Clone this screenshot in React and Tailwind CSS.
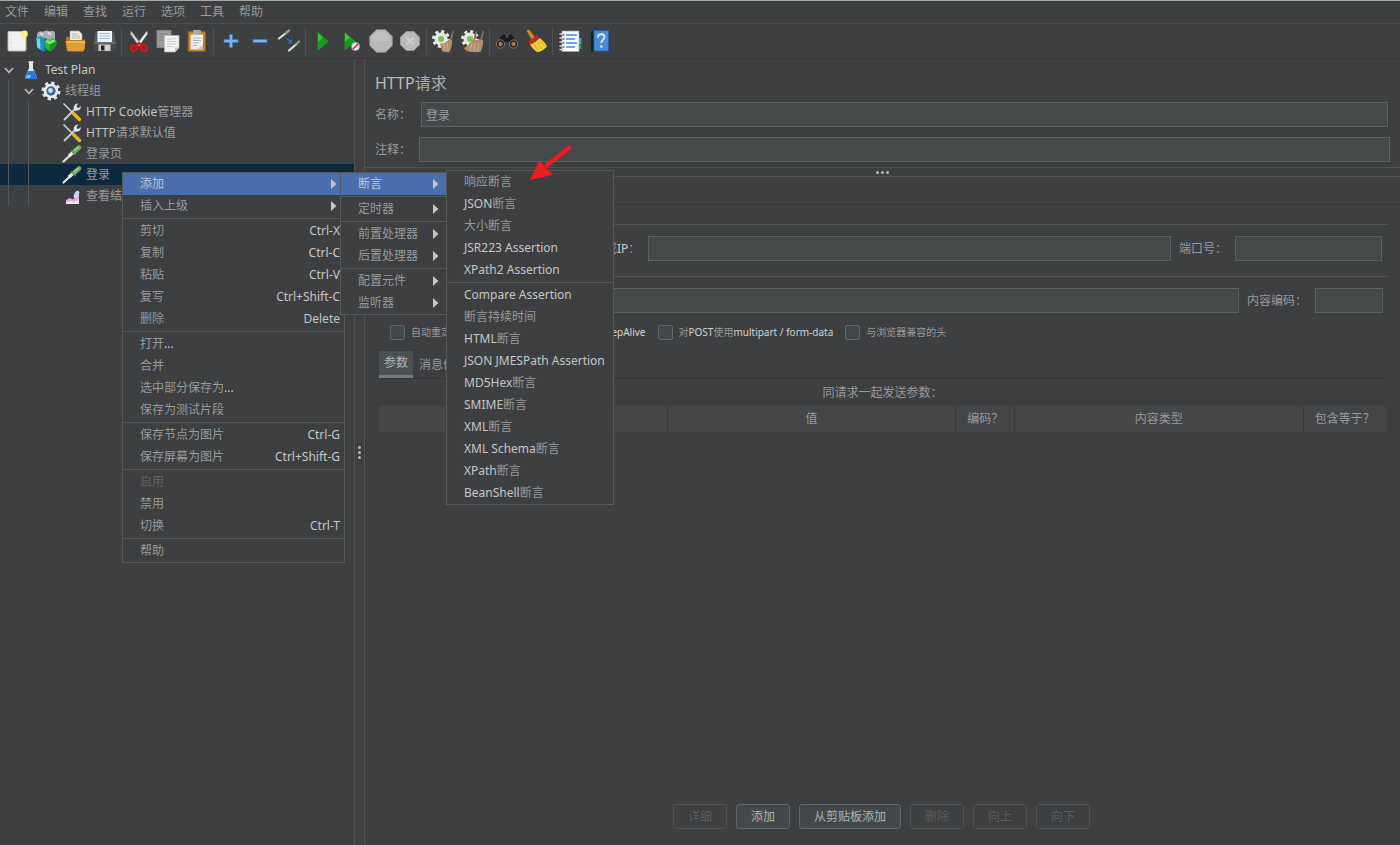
import React from "react";

/* ---------- text helper: Latin runs are drawn brighter than the Chinese ones ---------- */

function Mixed({ text, latin = "text-[#c6c8c9]" }) {
  const parts = text.split(/([\x21-\x7e][\x20-\x7e]*)/).filter(Boolean);
  return parts.map((part, i) =>
    /^[\x21-\x7e]/.test(part) ? (
      <span key={i} className={latin}>
        {part}
      </span>
    ) : (
      part
    )
  );
}

/* ---------- toolbar icons ---------- */

function Icon({ children }) {
  return (
    <svg viewBox="0 0 24 24" className="h-6 w-6" aria-hidden="true">
      {children}
    </svg>
  );
}

const NewIcon = () => (
  <Icon>
    <rect x="2" y="2.500" width="18" height="19.500" rx="1" fill="#f1f1ef" stroke="#b9bab8" />
    <path d="M5 5v15" stroke="#cfcfcf" strokeDasharray="1.500 2.500" />
    <circle cx="18.500" cy="5" r="3.400" fill="#f4ee74" />
    <circle cx="18.500" cy="5" r="1.500" fill="#fffbd0" />
  </Icon>
);

const TemplatesIcon = () => (
  <Icon>
    <path d="M2 5.500C2.500 2.500 6 1.500 8 3c2-2 5-2 6.500-.500C16 1 19.500 1.500 20 4v6l-9 3-9-4z" fill="#a9afb3" />
    <path d="M5 4l3 2M13 3.500l3 2" stroke="#e5e8ea" strokeWidth="1.600" />
    <path d="M1.500 8.500l5-1 5 3v10.500l-4 1.500-5.500-4z" fill="#1c93c2" />
    <path d="M1.500 8.500l3.500 1.500.5 10.500L2 18z" fill="#79d3e8" />
    <path d="M9.500 10l2-1v11l-2 2z" fill="#0a5f8a" />
    <path d="M9.500 13.500C10 10.500 13 9.500 15 11c1.500-2.500 6-1.500 6.500 1.500.5 4-2 7.500-6.500 9.500-3-.500-6-3.500-5.500-8.500z" fill="#29b52d" />
    <path d="M10.500 13c1-2 3-2.500 4.500-.800 1.500-2 4-2 5.500 0L15 15.500z" fill="#7ee765" />
    <path d="M15 15.500V22c4.500-2 7-5.500 6.500-9.500z" fill="#13961c" />
  </Icon>
);

const OpenIcon = () => (
  <Icon>
    <path d="M6 2h9l3 3v9H6z" fill="#f0f0ee" stroke="#a5a5a3" strokeWidth=".7" />
    <path d="M8 5h6M8 7h8M8 9h8" stroke="#a8a8a8" strokeWidth=".9" />
    <path d="M2 9.500c0-1 .5-1.500 1.500-1.500H6v3h13l2-1v10H3.500z" fill="#b77a1c" />
    <path d="M1.500 12h20l-1.500 9.500c-.2.700-.7 1-1.500 1h-14c-.8 0-1.300-.3-1.500-1z" fill="#dd9f35" />
    <path d="M2.500 13h18" stroke="#f7cf7c" />
  </Icon>
);

const SaveIcon = () => (
  <Icon>
    <path d="M2.500 2.500h18.500l1.500 11v8.500H1V13.500z" fill="#5a5e61" />
    <rect x="4.500" y="2" width="14.500" height="11" fill="#edf2f7" />
    <path d="M6.500 4.500h10.500M6.500 7h10.500M6.500 9.500h10.500" stroke="#a3bfdc" strokeWidth="1.100" />
    <path d="M1 14h21.500v8H1z" fill="#46494c" />
    <path d="M1 14h21.500" stroke="#85898c" />
    <rect x="5.500" y="15.500" width="12" height="6.500" fill="#cfd1d2" />
    <rect x="8" y="16.500" width="3.500" height="5" fill="#232527" />
  </Icon>
);

const CutIcon = () => (
  <Icon>
    <path d="M4 2l10 13-2 2L3.500 5z" fill="#d9dcdd" stroke="#8c8f90" strokeWidth=".6" />
    <path d="M20 2L10 15l2 2 8.500-12z" fill="#f2f3f3" stroke="#8c8f90" strokeWidth=".6" />
    <ellipse cx="7" cy="19" rx="3.200" ry="2.800" transform="rotate(-35 7 19)" fill="none" stroke="#d11717" strokeWidth="2.600" />
    <ellipse cx="17" cy="19" rx="3.200" ry="2.800" transform="rotate(35 17 19)" fill="none" stroke="#d11717" strokeWidth="2.600" />
    <path d="M9 17l3-3 3 3" fill="none" stroke="#d11717" strokeWidth="2.200" />
  </Icon>
);

const CopyIcon = () => (
  <Icon>
    <rect x="1" y="1.500" width="14" height="17" fill="#9b9d9d" stroke="#858787" />
    <path d="M3 5h9M3 8h9M3 11h5" stroke="#7f8181" />
    <path d="M8.500 6.500H23v12l-4 4.500H8.500z" fill="#f3f3f1" stroke="#b3b4b3" strokeWidth=".7" />
    <path d="M11 10h9M11 12.500h9M11 15h9M11 17.500h6" stroke="#c3c4c4" strokeWidth=".9" />
    <path d="M23 18.500h-4V23z" fill="#c4c5c5" />
  </Icon>
);

const PasteIcon = () => (
  <Icon>
    <rect x="3" y="2.500" width="17.500" height="20" rx="1" fill="#c08322" stroke="#8c5b12" strokeWidth=".8" />
    <path d="M5.500 5.500h12.500V20.500H5.500z" fill="#efefed" />
    <rect x="8" y="1" width="8" height="4.500" rx="1" fill="#a8aaab" />
    <path d="M8 9h8M8 11.500h8M8 14h6M8 16.500h4" stroke="#b0b0b0" />
    <path d="M18 15.500L12.500 20.500H18z" fill="#c3c3c2" />
  </Icon>
);

const PlusIcon = () => (
  <Icon>
    <path d="M10.500 5.500h3v5h5.500v3h-5.500v5h-3v-5H5v-3h5.500z" fill="#7db2ee" stroke="#3d78c0" strokeWidth=".7" />
  </Icon>
);

const MinusIcon = () => (
  <Icon>
    <rect x="5" y="10.500" width="14" height="3" fill="#7db2ee" stroke="#3d78c0" strokeWidth=".7" />
  </Icon>
);

const ToggleIcon = () => (
  <Icon>
    <path d="M2 9.500l7-5.500" stroke="#dfe4dc" strokeWidth="2.200" strokeLinecap="round" />
    <path d="M9 4l3-2.500" stroke="#83b364" strokeWidth="2.400" strokeLinecap="round" />
    <path d="M12 21.500l7-6" stroke="#dfe4dc" strokeWidth="2.200" strokeLinecap="round" />
    <path d="M19 15.500l3-3" stroke="#83b364" strokeWidth="2.400" strokeLinecap="round" />
    <path d="M9.500 9l4 4" stroke="#2f6fc4" strokeWidth="1.500" />
    <path d="M15 14.500v-4.500l-4.500 4.500z" fill="#2f6fc4" />
  </Icon>
);

const StartIcon = () => (
  <Icon>
    <path d="M6.500 3L18 12.500 6.500 22z" fill="#1b9a1d" />
    <path d="M7 4l5 4.500L7 13z" fill="#3cc63c" />
  </Icon>
);

const StartNoPauseIcon = () => (
  <Icon>
    <path d="M4.500 3L16 12.500 4.500 21.500z" fill="#1b9a1d" />
    <path d="M5 4l5 4.500L5 13z" fill="#3cc63c" />
    <circle cx="15.500" cy="17.500" r="4" fill="#e9f0fa" stroke="#7fa3d4" strokeWidth="1" />
    <path d="M13 20l5-5" stroke="#d92c2c" strokeWidth="1.700" />
  </Icon>
);

const StopIcon = () => (
  <Icon>
    <path d="M7.500.8h9L23.200 7.500v9l-6.700 6.700h-9L.8 16.500v-9z" fill="#b7b9b8" stroke="#989a9a" strokeWidth=".9" />
    <path d="M8 2.500h8l5.500 5.500v4h-19V8z" fill="#bfc1c0" />
  </Icon>
);

const ShutdownIcon = () => (
  <Icon>
    <path d="M8.200 2.500h7.600l5.700 5.700v7.600l-5.700 5.700H8.200l-5.700-5.700V8.200z" fill="#b9bbba" stroke="#989a9a" strokeWidth=".9" />
    <path d="M8.500 8.500l7 7M15.500 8.500l-7 7" stroke="#cccecd" strokeWidth="2" />
  </Icon>
);

const Gear = () => (
  <g>
    <circle cx="9" cy="10" r="7.500" fill="none" stroke="#e9ebe9" strokeWidth="3" strokeDasharray="3 2.890" />
    <circle cx="9" cy="10" r="6.600" fill="#e4e7e4" />
    <circle cx="9" cy="10" r="3" fill="#7cc44c" />
  </g>
);

const ClearIcon = () => (
  <Icon>
    <Gear />
    <path d="M20.500 1.500l1.500.5-2.500 10-2-.5z" fill="#86705a" />
    <path d="M8 14.500c3.500.5 7-1.500 9-4l3 .5c.5 4-.5 8-2.500 12-3 .5-6 0-7.500-1z" fill="#b18f68" />
    <path d="M12 15.500l1 6M15.500 14l.5 8" stroke="#d2b48d" strokeWidth=".9" />
  </Icon>
);

const ClearAllIcon = () => (
  <Icon>
    <Gear />
    <path d="M14.500 2l1.500.5-1.500 8h-2zM21.500 1.500l1.500.5-2 10h-2z" fill="#86705a" />
    <path d="M3 19c3-1 6-5 9-8.500l3 .5 4-.5 3 .5c.5 4-.5 8-2.500 12-5 .3-9 .2-12-.500-2-.5-3.500-1.500-4.500-3.500z" fill="#b18f68" />
    <path d="M11 14.500l-2 7M14 14l-1 8M17.500 14l-.5 8" stroke="#d2b48d" strokeWidth=".9" />
  </Icon>
);

const SearchIcon = () => (
  <Icon>
    <path d="M6.500 5.500l3.500-1 1.500 4h1l1.500-4 3.500 1 5.500 9-3 5-6-2-1-4h-2l-1 4-6 2-3-5z" fill="#17191b" stroke="#595b5d" strokeWidth=".7" />
    <circle cx="5.500" cy="15" r="4.200" fill="#24272a" stroke="#77797b" strokeWidth="1" />
    <circle cx="18.500" cy="15" r="4.200" fill="#24272a" stroke="#77797b" strokeWidth="1" />
    <circle cx="5.500" cy="15" r="2.200" fill="#b8713f" />
    <circle cx="18.500" cy="15" r="2.200" fill="#b8713f" />
  </Icon>
);

const BroomIcon = () => (
  <Icon>
    <path d="M2.500 1.500c1.500-1.200 3-.8 4 .7L11 8.500 7.500 10.500z" fill="#d18a2a" />
    <path d="M4 12.500c3-1.500 6-4 8.500-7L15.500 9c-2.500 3-6 5.500-9.500 6.500z" fill="#c02a1a" />
    <path d="M6 15.500c3.500-1 7-3.500 9.500-6.500 3 2 5.500 4.500 7.500 8.500-2.500 3-6 5-9.500 5.700-3-1.700-5.500-4.200-7.500-7.700z" fill="#f3cf3c" />
    <path d="M10 15.500l4.500 6M13 13l5 7M15.500 11.500l5.500 6" stroke="#c69a18" strokeWidth=".8" />
  </Icon>
);

const FunctionIcon = () => (
  <Icon>
    <path d="M19 9h4.500v6H19z" fill="#4b8fd8" />
    <path d="M19 15h4.500v5H19z" fill="#23a52b" />
    <rect x="4" y="2" width="17" height="20.500" fill="#fafafa" stroke="#9fa1a2" strokeWidth=".7" />
    <path d="M8 6h11M8 10h9M8 14h11M8 18h9" stroke="#4489d8" strokeWidth="1.600" />
    <path d="M1.500 5h5M1.500 9h5M1.500 13h5M1.500 17h5M1.500 20.500h5" stroke="#d6d7d8" strokeWidth="1.600" />
    <path d="M4.500 6h2M4.500 10h2M4.500 14h2M4.500 18h2" stroke="#222" />
  </Icon>
);

const HelpIcon = () => (
  <Icon>
    <path d="M4 2.500l4-1V22l-4 1z" fill="#15202f" />
    <rect x="7" y="1.500" width="14.500" height="20.500" fill="#4a8ad6" stroke="#2b62a8" strokeWidth=".8" />
    <path d="M11 8.500c0-4.500 6.500-4 6.500-.5 0 3-3.200 2.700-3.200 6" fill="none" stroke="#dceafa" strokeWidth="1.800" />
    <circle cx="14.300" cy="17.500" r="1.200" fill="#dceafa" />
  </Icon>
);

const TOOLBAR = [
  [["新建", NewIcon], ["模板", TemplatesIcon], ["打开", OpenIcon], ["保存", SaveIcon]],
  [["剪切", CutIcon], ["复制", CopyIcon], ["粘贴", PasteIcon]],
  [["展开", PlusIcon], ["收起", MinusIcon], ["切换", ToggleIcon]],
  [["启动", StartIcon], ["不停顿启动", StartNoPauseIcon], ["停止", StopIcon], ["关闭", ShutdownIcon]],
  [["清除", ClearIcon], ["清除全部", ClearAllIcon]],
  [["查找", SearchIcon], ["重置查找", BroomIcon]],
  [["函数助手", FunctionIcon], ["帮助", HelpIcon]],
];

/* ---------- tree icons ---------- */

function TreeSvg({ children }) {
  return (
    <svg viewBox="0 0 20 20" className="h-5 w-5" aria-hidden="true">
      {children}
    </svg>
  );
}

const FlaskIcon = () => (
  <TreeSvg>
    <path d="M8 2h4v6l4 9.500c.2.900-.3 1.500-1 1.500H5c-.7 0-1.200-.6-1-1.500L8 8z" fill="#dfe7ef" />
    <path d="M7 11h6l3 6.500c.2.900-.3 1.500-1 1.500H5c-.7 0-1.200-.6-1-1.500z" fill="#1f7be0" />
    <path d="M6 15h4l-1 3H5z" fill="#7db9f5" />
    <path d="M7.500 2h5" stroke="#f2f5f8" strokeWidth="1.500" />
  </TreeSvg>
);

const CogIcon = () => (
  <TreeSvg>
    <circle cx="10" cy="10" r="8" fill="none" stroke="#dfe3e7" strokeWidth="3" strokeDasharray="3.280 3" />
    <circle cx="10" cy="10" r="6" fill="#3f679d" stroke="#e8ebee" strokeWidth="2.600" />
    <circle cx="9.500" cy="9.500" r="2.400" fill="#cfe0f4" />
  </TreeSvg>
);

const ToolsIcon = () => (
  <TreeSvg>
    <path d="M1.500 1.500l8 8" stroke="#d5d8da" strokeWidth="1.600" />
    <path d="M11.500 11.500l6 6" stroke="#eab620" strokeWidth="3.400" strokeLinecap="round" />
    <path d="M2.500 17.500l11-11" stroke="#c9cccd" strokeWidth="2" strokeLinecap="round" />
    <path d="M12 7.500c-1-3 1-6.500 4.500-6l-2 2.500.5 1.500 1.500.5 2.300-2C19.500 7 16 9.500 13 8.500z" fill="#e2e4e5" />
  </TreeSvg>
);

const PipetteIcon = () => (
  <TreeSvg>
    <path d="M1.500 17.500l9-8.500" stroke="#dfe3e0" strokeWidth="2.200" strokeLinecap="round" />
    <path d="M7 12l4-3.700" stroke="#eceeed" strokeWidth="3.200" />
    <path d="M9 6.500l4.500 4.500" stroke="#6d8a63" strokeWidth="1.400" />
    <path d="M12.500 7.500L17 3.500" stroke="#69ad59" strokeWidth="4.600" strokeLinecap="round" />
    <path d="M12.500 6.500L16 3.500" stroke="#a6d896" strokeWidth="1.300" strokeLinecap="round" />
  </TreeSvg>
);

const ResultsIcon = () => (
  <TreeSvg>
    <path d="M4 18v-4l4-2 3 1.500 6-6.500v11z" fill="#e6a5dc" />
    <path d="M4 18v-2l5-1 3 1 5-3v5z" fill="#f6e3f3" />
    <ellipse cx="14.500" cy="8.500" rx="2.300" ry="4" transform="rotate(25 14.500 8.500)" fill="#c4daf3" />
  </TreeSvg>
);

const Chevron = () => (
  <svg viewBox="0 0 10 10" className="h-[10px] w-[10px]" aria-hidden="true">
    <path d="M1 3l4 4.500L9 3" fill="none" stroke="#b4b6b8" strokeWidth="1.800" />
  </svg>
);

const TREE = [
  { label: "Test Plan", depth: 0, icon: FlaskIcon },
  { label: "线程组", depth: 1, icon: CogIcon },
  { label: "HTTP Cookie管理器", depth: 2, icon: ToolsIcon },
  { label: "HTTP请求默认值", depth: 2, icon: ToolsIcon },
  { label: "登录页", depth: 2, icon: PipetteIcon },
  { label: "登录", depth: 2, icon: PipetteIcon, selected: true },
  { label: "查看结果树", depth: 2, icon: ResultsIcon },
];

function Guide() {
  return <span className="h-full w-px bg-[#55585a]" />;
}

function TreeRow({ item }) {
  const { label, depth, icon: NodeIcon, selected } = item;
  return (
    <li
      role="treeitem"
      aria-selected={!!selected}
      className={`relative flex h-[21px] items-center whitespace-nowrap ${selected ? "bg-[#0d293e]" : ""}`}
    >
      {depth >= 1 && (
        <span className="flex h-full w-5 shrink-0 pl-2">
          <Guide />
        </span>
      )}
      {depth === 2 && (
        <span className="flex h-full w-[38px] shrink-0 pl-2">
          <Guide />
        </span>
      )}
      {depth < 2 && (
        <span className="flex w-[17px] shrink-0 items-center justify-center">
          <Chevron />
        </span>
      )}
      <span className="flex w-7 shrink-0 items-center justify-center">
        <NodeIcon />
      </span>
      <span>
        <Mixed text={label} />
      </span>
      {selected && <ContextMenu />}
    </li>
  );
}

/* ---------- menus ---------- */

const Arrow = () => (
  <svg viewBox="0 0 7 10" className="h-[10px] w-[7px]" aria-hidden="true">
    <path d="M1 0l5.500 5L1 10z" fill="#c3c5c6" />
  </svg>
);

function MenuItem({ label, keys, sub, active, disabled }) {
  return (
    <button
      type="button"
      role="menuitem"
      disabled={disabled}
      className={`flex h-[22px] w-full items-center justify-between whitespace-nowrap pl-[17px] ${
        sub ? "pr-[7px]" : "pr-1"
      } ${active ? "bg-[#4b6eaf] text-[#bcc5d4]" : ""} ${disabled ? "text-[#606264]" : ""}`}
    >
      <span>
        <Mixed text={label} />
      </span>
      {keys && <span className="text-[#c6c8c9]">{keys}</span>}
      {sub && <Arrow />}
    </button>
  );
}

function Menu({ groups, className, label, children }) {
  return (
    <div
      role="menu"
      aria-label={label}
      className={`absolute border border-[#56585a] bg-[#3d3f41] text-[#999b9d] ${className}`}
    >
      {groups.map((group, i) => (
        <div key={i} className={i > 0 ? "mt-px border-t border-[#56585a] pt-px" : ""}>
          {group.map((item) => (
            <MenuItem key={item.label} {...item} />
          ))}
        </div>
      ))}
      {children}
    </div>
  );
}

const CONTEXT_GROUPS = [
  [
    { label: "添加", sub: true, active: true },
    { label: "插入上级", sub: true },
  ],
  [
    { label: "剪切", keys: "Ctrl-X" },
    { label: "复制", keys: "Ctrl-C" },
    { label: "粘贴", keys: "Ctrl-V" },
    { label: "复写", keys: "Ctrl+Shift-C" },
    { label: "删除", keys: "Delete" },
  ],
  [{ label: "打开..." }, { label: "合并" }, { label: "选中部分保存为..." }, { label: "保存为测试片段" }],
  [
    { label: "保存节点为图片", keys: "Ctrl-G" },
    { label: "保存屏幕为图片", keys: "Ctrl+Shift-G" },
  ],
  [{ label: "启用", disabled: true }, { label: "禁用" }, { label: "切换", keys: "Ctrl-T" }],
  [{ label: "帮助" }],
];

const ADD_GROUPS = [
  [{ label: "断言", sub: true, active: true }],
  [{ label: "定时器", sub: true }],
  [
    { label: "前置处理器", sub: true },
    { label: "后置处理器", sub: true },
  ],
  [
    { label: "配置元件", sub: true },
    { label: "监听器", sub: true },
  ],
];

const ASSERTION_GROUPS = [
  [
    { label: "响应断言" },
    { label: "JSON断言" },
    { label: "大小断言" },
    { label: "JSR223 Assertion" },
    { label: "XPath2 Assertion" },
  ],
  [
    { label: "Compare Assertion" },
    { label: "断言持续时间" },
    { label: "HTML断言" },
    { label: "JSON JMESPath Assertion" },
    { label: "MD5Hex断言" },
    { label: "SMIME断言" },
    { label: "XML断言" },
    { label: "XML Schema断言" },
    { label: "XPath断言" },
    { label: "BeanShell断言" },
  ],
];

function ContextMenu() {
  return (
    <Menu label="节点菜单" groups={CONTEXT_GROUPS} className="left-[122px] top-2 z-20 w-[223px]">
      <Menu label="添加" groups={ADD_GROUPS} className="left-[217px] -top-px w-[107px]">
        <Menu label="断言" groups={ASSERTION_GROUPS} className="left-[105px] -top-[3px] w-[168px]">
          <svg viewBox="0 0 44 38" className="absolute left-[82px] -top-[27px] h-[38px] w-[44px]" aria-hidden="true">
            <path d="M40 4L18 21" stroke="#ee1c24" strokeWidth="4.500" strokeLinecap="round" />
            <path d="M1 36L10.500 16.500l4 4.500 9.500 9.500z" fill="#ee1c24" />
            <path d="M1 36L11 18l11 13z" fill="#ee1c24" />
          </svg>
        </Menu>
      </Menu>
    </Menu>
  );
}

/* ---------- request editor ---------- */

const FIELD = "h-[25px] min-w-0 border border-[#5e6162] bg-[#45494a] px-1 text-[#999b9d] outline-none";

const CHECKS = ["自动重定向", "跟随重定向", "使用 KeepAlive", "对POST使用multipart / form-data", "与浏览器兼容的头"];

function RequestPanel() {
  return (
    <main className="flex min-w-0 flex-1 flex-col">
      <header className="px-[10px] pb-[5px] pt-3">
        <h1 className="h-6 text-[16px] leading-6 text-[#a9abac]">
          <Mixed text="HTTP请求" latin="text-[#b9bbbc]" />
        </h1>
        <div className="mt-[7px] flex items-center pr-[2px]">
          <label htmlFor="name" className="w-[46px]">
            名称：
          </label>
          <input id="name" defaultValue="登录" className={`${FIELD} flex-1`} />
        </div>
        <div className="mt-[10px] flex items-center">
          <label htmlFor="comment" className="w-[44px]">
            注释：
          </label>
          <input id="comment" className={`${FIELD} flex-1`} />
        </div>
      </header>

      <div className="flex h-[10px] items-center justify-center gap-[2px] border-y border-[#505254]">
        <i className="h-[3px] w-[3px] rounded-full bg-[#b8babb]" />
        <i className="h-[3px] w-[3px] rounded-full bg-[#b8babb]" />
        <i className="h-[3px] w-[3px] rounded-full bg-[#b8babb]" />
      </div>

      <div className="h-7 border-b border-[#343638]" />

      <section className="flex flex-1 flex-col pl-[14px] pr-3 pt-[19px]">
        <div className="flex items-center gap-2 border-t border-[#505254] pl-[49px] pr-[6px] pt-[11px]">
          <input id="protocol" aria-label="协议" className={`${FIELD} w-[109px]`} />
          <label htmlFor="server">
            <Mixed text="服务器名称或IP：" />
          </label>
          <input id="server" className={`${FIELD} flex-1`} />
          <label htmlFor="port">端口号：</label>
          <input id="port" className={`${FIELD} w-[147px]`} />
        </div>

        <div className="mt-[15px] flex items-center gap-2 border-t border-[#505254] pr-[5px] pt-[11px]">
          <select
            aria-label="请求方法"
            className="h-[25px] w-16 border border-[#5e6162] bg-[#45494a] text-[#bfc1c2]"
          />
          <input id="path" aria-label="路径" className={`${FIELD} flex-1`} />
          <label htmlFor="encoding">内容编码：</label>
          <input id="encoding" className={`${FIELD} w-[68px]`} />
        </div>

        <div className="mt-[10px] flex h-[18px] items-center gap-3 whitespace-nowrap pl-[11px] text-[10px]">
          {CHECKS.map((text) => (
            <label key={text} className="flex items-center gap-[6px]">
              <input
                type="checkbox"
                className="h-[15px] w-[15px] appearance-none rounded-[2px] border border-[#5f6a6b] bg-[#43494a]"
              />
              <span>
                <Mixed text={text} latin="text-[#d2d4d5]" />
              </span>
            </label>
          ))}
        </div>

        <div className="mr-1 mt-[10px] border-b border-[#343638]" role="tablist">
          <div className="flex h-[27px] items-stretch">
            <button
              type="button"
              role="tab"
              aria-selected="true"
              className="w-[34px] border-b-[3px] border-[#747c7d] bg-[#4b5152] text-[#b4b6b7]"
            >
              参数
            </button>
            <button type="button" role="tab" aria-selected="false" className="px-[6px]">
              消息体数据
            </button>
          </div>
        </div>

        <div className="mr-[2px]">
          <table className="w-full table-fixed border-collapse">
            <caption className="h-[27px] leading-[28px]">同请求一起发送参数：</caption>
            <colgroup>
              <col />
              <col />
              <col className="w-[59px]" />
              <col />
              <col className="w-[83px]" />
            </colgroup>
            <thead>
              <tr className="h-[26px] bg-[#454648]">
                <th aria-label="名称" className="border-r border-[#38393b] font-normal" />
                <th className="border-r border-[#38393b] font-normal">值</th>
                <th className="border-r border-[#38393b] font-normal">编码？</th>
                <th className="border-r border-[#38393b] font-normal">内容类型</th>
                <th className="font-normal">包含等于？</th>
              </tr>
            </thead>
          </table>
        </div>

        <div className="mr-1 mt-auto flex justify-center gap-[9px] pb-4">
          <ActionButton disabled>详细</ActionButton>
          <ActionButton>添加</ActionButton>
          <ActionButton>从剪贴板添加</ActionButton>
          <ActionButton disabled>删除</ActionButton>
          <ActionButton disabled>向上</ActionButton>
          <ActionButton disabled>向下</ActionButton>
        </div>
      </section>
    </main>
  );
}

function ActionButton({ disabled, children }) {
  return (
    <button
      type="button"
      disabled={disabled}
      className={`h-[25px] rounded-[3px] border px-[14px] ${
        disabled ? "border-[#4f5153] text-[#5c5e60]" : "border-[#5f6768] bg-[#43494a] text-[#b0b2b3]"
      }`}
    >
      {children}
    </button>
  );
}

/* ---------- page ---------- */

const MENUS = ["文件", "编辑", "查找", "运行", "选项", "工具", "帮助"];

export default function App() {
  return (
    <div className="flex min-h-screen flex-col border-t border-[#a6abac] bg-[#3d3f41] font-['Noto_Sans','Noto_Sans_CJK_SC',sans-serif] text-[12px] leading-4 text-[#999b9d]">
      <nav className="flex h-[23px] items-center gap-[15px] border-b border-[#4b4d4f] pl-[5px]">
        {MENUS.map((name) => (
          <button key={name} type="button">
            {name}
          </button>
        ))}
      </nav>

      <div role="toolbar" aria-label="工具栏" className="flex h-[35px] items-center border-b border-[#363839] pl-[3px]">
        {TOOLBAR.map((group, i) => (
          <React.Fragment key={i}>
            {i > 0 && <span className="mx-[2px] h-7 w-px bg-[#505254]" />}
            {group.map(([name, ToolIcon]) => (
              <button key={name} type="button" aria-label={name} className="flex w-[29px] items-center justify-center">
                <ToolIcon />
              </button>
            ))}
          </React.Fragment>
        ))}
      </div>

      <div className="flex flex-1">
        <aside className="w-[354px] shrink-0">
          <ul role="tree">
            {TREE.map((item) => (
              <TreeRow key={item.label} item={item} />
            ))}
          </ul>
        </aside>
        <div className="flex w-[11px] shrink-0 flex-col items-center justify-center gap-[2px] border-x border-[#505254]">
          <i className="h-[3px] w-[3px] rounded-full bg-[#b8babb]" />
          <i className="h-[3px] w-[3px] rounded-full bg-[#b8babb]" />
          <i className="h-[3px] w-[3px] rounded-full bg-[#b8babb]" />
        </div>
        <RequestPanel />
      </div>
    </div>
  );
}
